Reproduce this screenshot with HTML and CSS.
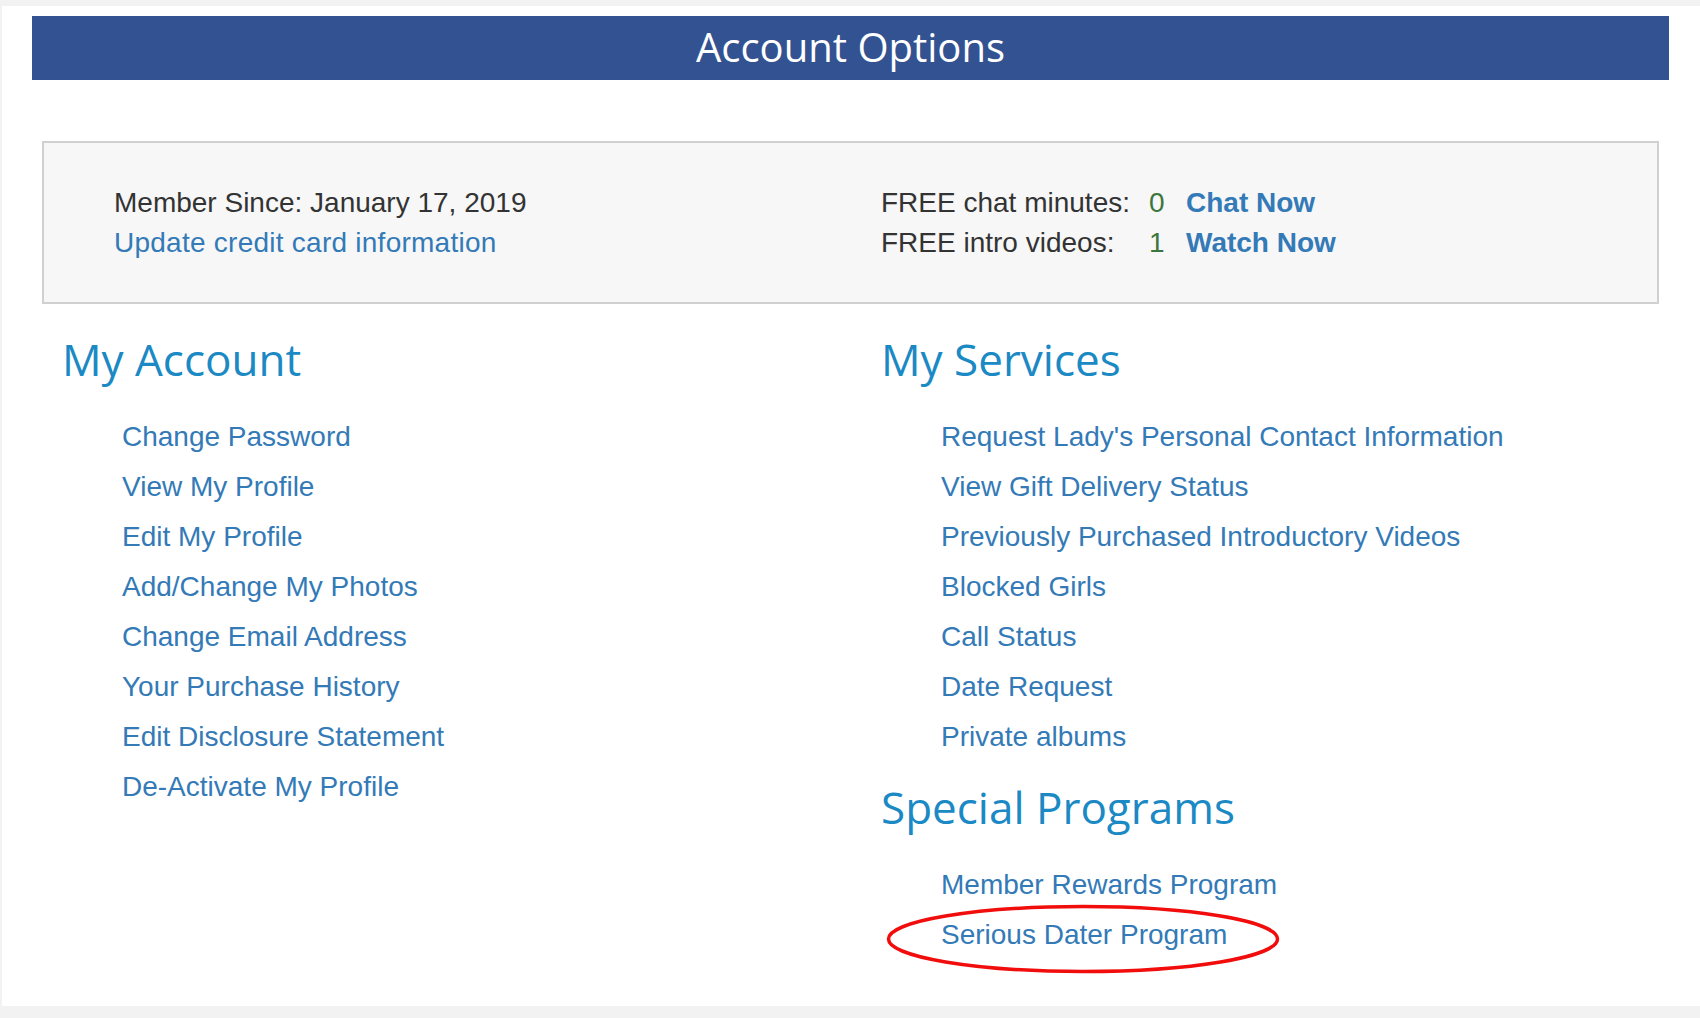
FILE: index.html
```html
<!DOCTYPE html>
<html lang="en">
<head>
<meta charset="utf-8">
<title>Account Options</title>
<link rel="stylesheet" href="styles.css">
</head>
<body>
<div class="page">
  <div class="bar">Account Options</div>

  <div class="infobox">
    <div class="info-left">
      <div class="line dark">Member Since: January 17, 2019</div>
      <div class="line"><a href="#">Update credit card information</a></div>
    </div>
    <div class="info-right">
      <span class="lbl">FREE chat minutes:</span><span class="num">0</span><a class="strong" href="#">Chat Now</a>
      <span class="lbl">FREE intro videos:</span><span class="num">1</span><a class="strong" href="#">Watch Now</a>
    </div>
  </div>

  <div class="columns">
    <div class="col">
      <h2>My Account</h2>
      <ul class="links">
        <li><a href="#">Change Password</a></li>
        <li><a href="#">View My Profile</a></li>
        <li><a href="#">Edit My Profile</a></li>
        <li><a href="#">Add/Change My Photos</a></li>
        <li><a href="#">Change Email Address</a></li>
        <li><a href="#">Your Purchase History</a></li>
        <li><a href="#">Edit Disclosure Statement</a></li>
        <li><a href="#">De-Activate My Profile</a></li>
      </ul>
    </div>
    <div class="col">
      <h2>My Services</h2>
      <ul class="links">
        <li><a href="#">Request Lady's Personal Contact Information</a></li>
        <li><a href="#">View Gift Delivery Status</a></li>
        <li><a href="#">Previously Purchased Introductory Videos</a></li>
        <li><a href="#">Blocked Girls</a></li>
        <li><a href="#">Call Status</a></li>
        <li><a href="#">Date Request</a></li>
        <li><a href="#">Private albums</a></li>
      </ul>
      <h2 class="special">Special Programs</h2>
      <ul class="links">
        <li><a href="#">Member Rewards Program</a></li>
        <li class="circled"><a href="#">Serious Dater Program</a>
          <svg class="ring" width="394" height="70" viewBox="0 0 394 70" aria-hidden="true">
            <ellipse cx="197" cy="35" rx="194.5" ry="32.5" fill="none" stroke="#f20d0d" stroke-width="3.5"/>
          </svg>
        </li>
      </ul>
    </div>
  </div>
</div>
</body>
</html>
```

FILE: styles.css
```css
html, body {
  margin: 0;
  padding: 0;
}
body {
  background: #f2f2f2;
  font-family: "Liberation Sans", Arial, sans-serif;
}
.page {
  margin: 6px 0 0 2px;
  height: 1000px;
  background: #ffffff;
  overflow: hidden;
}
.bar {
  box-sizing: border-box;
  margin: 10px 31px 0 30px;
  height: 64px;
  padding-top: 11px;
  background: #335291;
  color: #ffffff;
  text-align: center;
  font-family: "Open Sans", sans-serif;
  font-size: 40px;
  line-height: 1;
}
.infobox {
  margin: 61px 41px 0 40px;
  border: 2px solid #d0d0d0;
  background: #f7f7f7;
  padding: 40px 0 39px 70px;
  display: grid;
  grid-template-columns: 767px auto;
  font-size: 28px;
  line-height: 40px;
  color: #333333;
}
.info-left a {
  letter-spacing: 0.25px;
}
.info-right {
  display: grid;
  grid-template-columns: 268px 37px auto;
}
.num {
  color: #3c763d;
}
a {
  color: #337ab7;
  text-decoration: none;
}
a.strong {
  font-weight: bold;
}
.columns {
  display: grid;
  grid-template-columns: 819px auto;
  padding-left: 60px;
  margin-top: 29px;
}
h2 {
  margin: 0;
  font-family: "Open Sans", sans-serif;
  font-weight: 400;
  font-size: 44px;
  line-height: 52px;
  color: #1a89c4;
}
h2.special {
  margin-top: 19px;
}
.links {
  list-style: none;
  margin: 27px 0 0 0;
  padding: 0 0 0 60px;
  font-size: 28px;
  line-height: 50px;
}
.circled {
  position: relative;
}
.ring {
  position: absolute;
  left: -55px;
  top: -6px;
  pointer-events: none;
}
```
